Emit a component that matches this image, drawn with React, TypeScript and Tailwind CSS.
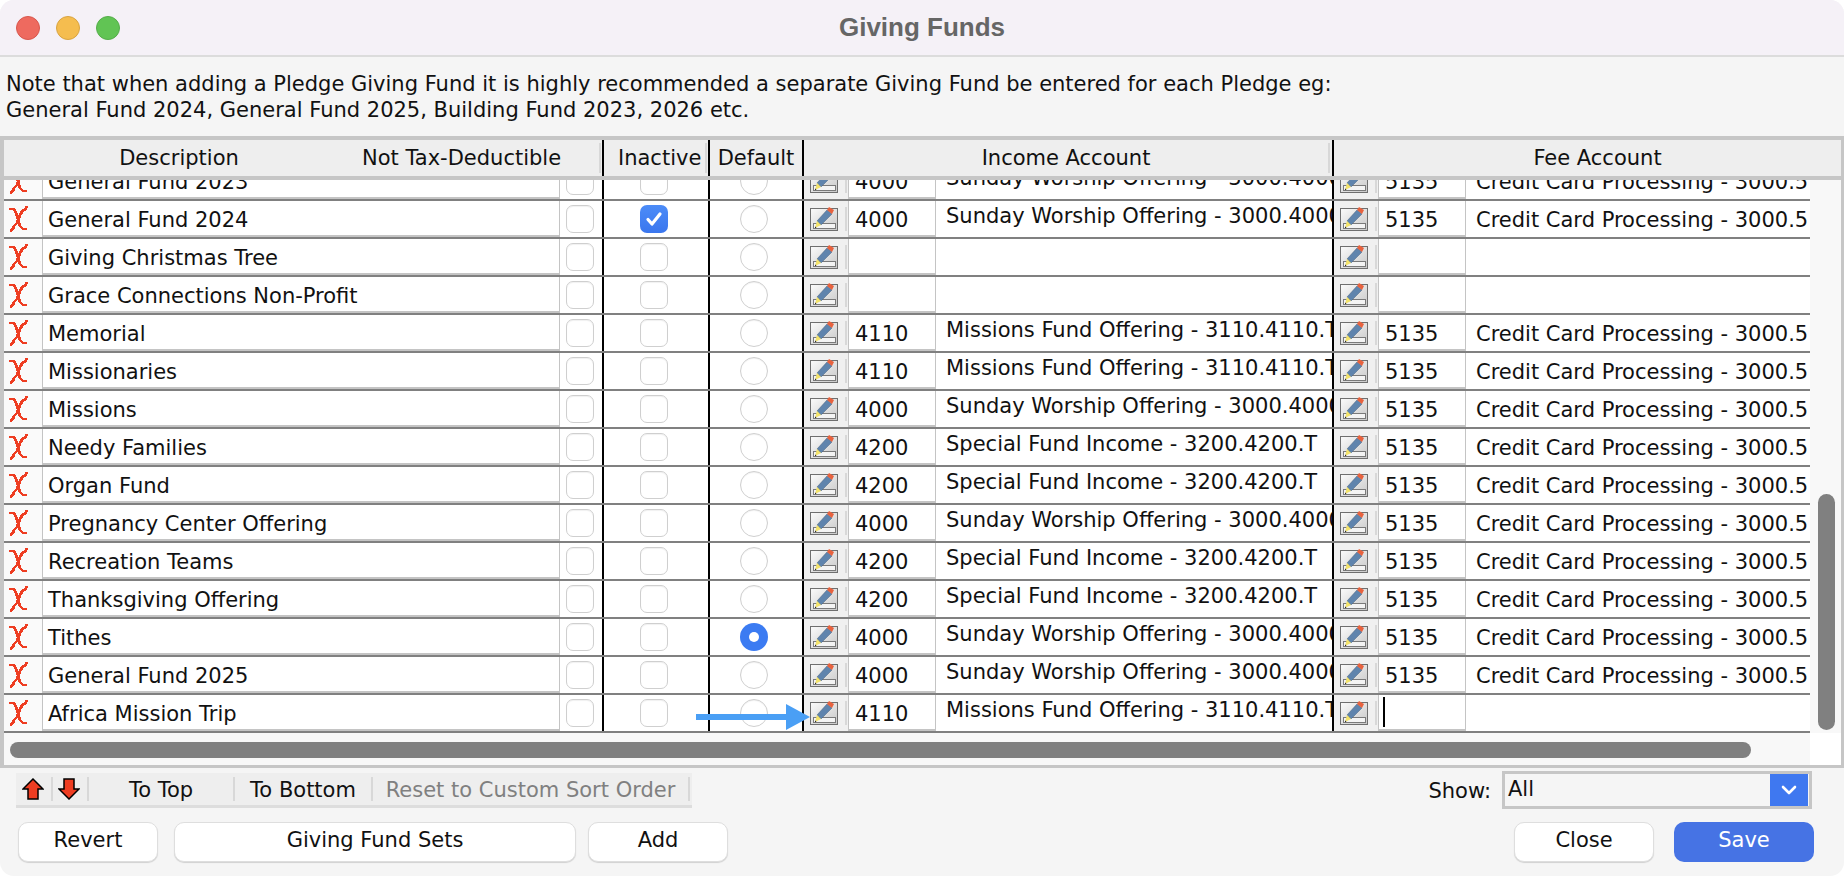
import React from 'react';

type Fund = {
  name: string;
  inactive?: boolean;
  isDefault?: boolean;
  code?: string;
  account?: string;
  feeCode?: string;
  feeAccount?: string;
  caret?: boolean;
};

const SUNDAY = 'Sunday Worship Offering - 3000.4000.T';
const MISSIONS = 'Missions Fund Offering - 3110.4110.T';
const SPECIAL = 'Special Fund Income - 3200.4200.T';
const CARD = 'Credit Card Processing - 3000.5135.T';

const FUNDS: Fund[] = [
  { name: 'General Fund 2023', code: '4000', account: SUNDAY, feeCode: '5135', feeAccount: CARD },
  { name: 'General Fund 2024', inactive: true, code: '4000', account: SUNDAY, feeCode: '5135', feeAccount: CARD },
  { name: 'Giving Christmas Tree' },
  { name: 'Grace Connections Non-Profit' },
  { name: 'Memorial', code: '4110', account: MISSIONS, feeCode: '5135', feeAccount: CARD },
  { name: 'Missionaries', code: '4110', account: MISSIONS, feeCode: '5135', feeAccount: CARD },
  { name: 'Missions', code: '4000', account: SUNDAY, feeCode: '5135', feeAccount: CARD },
  { name: 'Needy Families', code: '4200', account: SPECIAL, feeCode: '5135', feeAccount: CARD },
  { name: 'Organ Fund', code: '4200', account: SPECIAL, feeCode: '5135', feeAccount: CARD },
  { name: 'Pregnancy Center Offering', code: '4000', account: SUNDAY, feeCode: '5135', feeAccount: CARD },
  { name: 'Recreation Teams', code: '4200', account: SPECIAL, feeCode: '5135', feeAccount: CARD },
  { name: 'Thanksgiving Offering', code: '4200', account: SPECIAL, feeCode: '5135', feeAccount: CARD },
  { name: 'Tithes', isDefault: true, code: '4000', account: SUNDAY, feeCode: '5135', feeAccount: CARD },
  { name: 'General Fund 2025', code: '4000', account: SUNDAY, feeCode: '5135', feeAccount: CARD },
  { name: 'Africa Mission Trip', code: '4110', account: MISSIONS, caret: true },
];

// pixel-art delete cross
const DeleteIcon = () => (
  <svg width="19" height="26" viewBox="0 0 19 26" shapeRendering="crispEdges" fill="none" stroke="#ee3d22" strokeWidth="2.8">
    <path d="M0 3h5l2 4 4 13 3 3h4M18 0l-2 4h-2l-3 5-3 8-3 3-1 3-3 2" />
  </svg>
);

const PencilIcon = () => (
  <svg width="28" height="24" viewBox="0 0 28 24">
    <defs>
      <linearGradient id="pencil-bg" x1="0" y1="0" x2="1" y2="1">
        <stop offset="0" stopColor="#fbfbfb" />
        <stop offset="1" stopColor="#c8c8c8" />
      </linearGradient>
    </defs>
    <rect x="0.5" y="1.5" width="27" height="22" fill="url(#pencil-bg)" stroke="#6f6f6f" />
    <rect x="3.5" y="16.5" width="22" height="5" fill="#f4f4f4" stroke="#7a7a7a" />
    <path d="M7 14L17 3l5 4-11 11z" fill="#5f84ad" stroke="#46607f" strokeWidth="0.5" />
    <path d="M17 3l2-3 5 3-2 4z" fill="#e8623e" />
    <path d="M7 14l4 4-6 3z" fill="#f3e36b" />
    <path d="M5 19.500l1.500 1-1.500.7z" fill="#222" />
  </svg>
);

const Checkbox = ({ checked }: { checked?: boolean }) =>
  checked ? (
    <div className="w-[28px] h-[28px] rounded-[7px] bg-gradient-to-b from-[#4c8cf8] to-[#3a76ee] flex items-center justify-center">
      <svg width="20" height="20" viewBox="0 0 20 20" fill="none" stroke="#fff" strokeWidth="3.2" strokeLinecap="round" strokeLinejoin="round">
        <path d="M4 10.500l4 4.500 8-10" />
      </svg>
    </div>
  ) : (
    <div className="w-[28px] h-[28px] rounded-[7px] bg-white border border-[#cfcfcf] shadow-[inset_0_1px_1px_rgba(0,0,0,0.06)]" />
  );

const Radio = ({ checked }: { checked?: boolean }) =>
  checked ? (
    <div className="w-[28px] h-[28px] rounded-full bg-[#3b7bf2] flex items-center justify-center">
      <div className="w-[10px] h-[10px] rounded-full bg-white" />
    </div>
  ) : (
    <div className="w-[28px] h-[28px] rounded-full bg-white border border-[#cfcfcf] shadow-[inset_0_1px_1px_rgba(0,0,0,0.06)]" />
  );

const PencilCell = () => (
  <div className="w-[44px] h-full shrink-0 bg-[#f0f0f0] flex items-center">
    <div className="ml-[6px] flex"><PencilIcon /></div>
    <div className="ml-[7px] w-[2px] h-[24px] bg-[#d8d8d8]" />
  </div>
);

const Row = ({ fund }: { fund: Fund }) => (
  <div className="h-[38px] flex border-b-2 border-[#808080] bg-white">
    <div className="w-[38px] shrink-0 flex items-center pl-[5px] bg-[#fafafa]"><DeleteIcon /></div>
    <div className="w-[517px] shrink-0 pl-[5px] pt-[5px] flex items-center border-l border-b-2 border-[#c4c4c4] bg-white">{fund.name}</div>
    <div className="w-[43px] shrink-0 flex items-center pl-[6px] border-l border-[#c4c4c4]"><Checkbox /></div>
    <div className="w-[106px] shrink-0 flex items-center pl-[36px] border-l-2 border-black"><Checkbox checked={fund.inactive} /></div>
    <div className="w-[94px] shrink-0 flex items-center pl-[30px] border-l-2 border-black"><Radio checked={fund.isDefault} /></div>
    <div className="w-[2px] shrink-0 bg-black" />
    <PencilCell />
    <div className="w-[88px] shrink-0 pl-[6px] pt-[5px] flex items-center border-x border-b-2 border-[#c4c4c4]">{fund.code}</div>
    <div className="w-[396px] shrink-0 pl-[10px] pb-[4px] flex items-center overflow-hidden whitespace-nowrap">{fund.account}</div>
    <div className="w-[2px] shrink-0 bg-black" />
    <PencilCell />
    <div className="w-[88px] shrink-0 pl-[6px] pt-[5px] flex items-center border-x border-b-2 border-[#c4c4c4]">
      {fund.caret ? <div className="w-[2px] h-[30px] -ml-[2px] -mt-[5px] bg-black" /> : fund.feeCode}
    </div>
    <div className="w-[344px] shrink-0 pl-[10px] pt-[4px] flex items-center overflow-hidden whitespace-nowrap">{fund.feeAccount}</div>
  </div>
);

const Header = () => (
  <div className="h-[36px] flex items-center bg-[#eeeeee] text-[#111]">
    <div className="w-[114px] shrink-0" />
    <div className="w-[122px] shrink-0 pt-[2px] text-center whitespace-nowrap">Description</div>
    <div className="w-[122px] shrink-0" />
    <div className="w-[240px] shrink-0 flex justify-between items-center pr-[1px]">
      <span className="pt-[2px] whitespace-nowrap">Not Tax-Deductible</span>
      <span className="w-[2px] h-[30px] bg-[#d8d8d8]" />
    </div>
    <div className="w-[106px] h-full shrink-0 flex items-center justify-between border-l-2 border-black pl-[14px] pr-[1px]">
      <span className="pt-[2px]">Inactive</span>
      <span className="w-[2px] h-[30px] bg-[#d8d8d8]" />
    </div>
    <div className="w-[94px] h-full shrink-0 pt-[2px] flex items-center justify-center border-l-2 border-black whitespace-nowrap">Default</div>
    <div className="w-[530px] h-full shrink-0 flex items-center border-l-2 border-black pr-[2px]">
      <span className="flex-1 pt-[2px] text-center">Income Account</span>
      <span className="w-[2px] h-[30px] bg-[#d8d8d8]" />
    </div>
    <div className="flex-1 h-full pt-[2px] flex items-center justify-center border-l-2 border-black pl-[20px]">Fee Account</div>
  </div>
);

const ArrowIcon = ({ down }: { down?: boolean }) => (
  <svg width="22" height="22" viewBox="0 0 22 22" className={down ? 'rotate-180' : ''}>
    <path d="M11 1L21 11h-5v10H6V11H1z" fill="#ee3d22" stroke="#000" strokeWidth="1.5" />
  </svg>
);

const Btn = ({ children, w, primary }: { children: React.ReactNode; w: string; primary?: boolean }) => (
  <button
    className={`${w} h-[40px] pb-[3px] rounded-[10px] flex items-center justify-center ${
      primary ? 'bg-[#4673e4] text-white font-medium' : 'bg-white border border-[#dedede] shadow-[0_1px_1px_rgba(0,0,0,0.15)] text-[#111]'
    }`}
  >
    {children}
  </button>
);

export default function App() {
  return (
    <div className="relative w-[1844px] h-[876px] flex flex-col overflow-hidden rounded-[14px] bg-[#f5f5f5] text-[21px] text-[#111] font-['DejaVu_Sans',sans-serif]">
      <div className="h-[57px] shrink-0 flex items-center bg-[#f5f1f7] border-b-2 border-[#dcdcdc]">
        <div className="flex gap-[16px] pl-[16px]">
          <span className="w-[24px] h-[24px] rounded-full bg-[#ee6a5f] border border-[#d8574d]" />
          <span className="w-[24px] h-[24px] rounded-full bg-[#f5bd4f] border border-[#d9a441]" />
          <span className="w-[24px] h-[24px] rounded-full bg-[#61c454] border border-[#55ad4a]" />
        </div>
        <div className="flex-1 text-center pr-[120px] text-[26px] font-bold text-[#666666] font-['Liberation_Sans',sans-serif]">Giving Funds</div>
      </div>

      <div className="h-[79px] shrink-0 px-[6px] pt-[14px] leading-[26px] whitespace-nowrap">
        <div>Note that when adding a Pledge Giving Fund it is highly recommended a separate Giving Fund be entered for each Pledge eg:</div>
        <div>General Fund 2024, General Fund 2025, Building Fund 2023, 2026 etc.</div>
      </div>

      <div className="h-[632px] shrink-0 flex flex-col border-[#c6c6c6] border-t-4 border-l-4 border-r-[3px] border-b-[3px] bg-[#f8f8f8]">
        <div className="border-b-4 border-[#c6c6c6]"><Header /></div>
        <div className="h-[553px] flex overflow-hidden">
          <div className="w-[1806px] shrink-0 -mt-[17px]">
            {FUNDS.map((fund) => (
              <Row key={fund.name} fund={fund} />
            ))}
          </div>
          <div className="flex-1 bg-[#f8f8f8] flex flex-col justify-end pb-[3px] pl-[8px]">
            <div className="w-[17px] h-[236px] rounded-full bg-[#808080]" />
          </div>
        </div>
        <div className="flex-1 flex">
          <div className="w-[1806px] pl-[6px] pt-[9px]">
            <div className="w-[1741px] h-[16px] rounded-full bg-[#808080]" />
          </div>
          <div className="flex-1 bg-white" />
        </div>
      </div>

      <div className="flex-1 px-[16px] pt-[5px] flex flex-col">
        <div className="h-[35px] flex justify-between items-start">
          <div className="w-[676px] h-[35px] flex items-center bg-[#eeeeee] border-b-[3px] border-[#dddddd]">
            <div className="w-[35px] pl-[6px] flex"><ArrowIcon /></div>
            <div className="w-[2px] h-[24px] bg-[#d8d8d8]" />
            <div className="w-[34px] pl-[5px] flex"><ArrowIcon down /></div>
            <div className="w-[2px] h-[24px] bg-[#d8d8d8]" />
            <div className="w-[144px] pt-[3px] text-center">To Top</div>
            <div className="w-[2px] h-[24px] bg-[#d8d8d8]" />
            <div className="w-[136px] pt-[3px] text-center whitespace-nowrap">To Bottom</div>
            <div className="w-[2px] h-[24px] bg-[#d8d8d8]" />
            <div className="w-[315px] pt-[3px] text-center text-[#808080] whitespace-nowrap">Reset to Custom Sort Order</div>
            <div className="w-[2px] h-[24px] bg-[#d8d8d8]" />
          </div>
          <div className="flex items-center gap-[11px] -mt-[2px] pr-[16px]">
            <span className="pt-[4px]">Show:</span>
            <div className="w-[310px] h-[38px] border-[3px] border-[#c6c6c6] flex items-center justify-between pl-[3px] pr-[1px]">
              <span>All</span>
              <div className="w-[38px] h-[32px] bg-[#3f78f0] flex items-center justify-center">
                <svg width="16" height="10" viewBox="0 0 16 10" fill="none" stroke="#fff" strokeWidth="2.6" strokeLinecap="round" strokeLinejoin="round">
                  <path d="M2 2l6 6 6-6" />
                </svg>
              </div>
            </div>
          </div>
        </div>

        <div className="flex justify-between mt-[14px] pl-[2px] pr-[14px]">
          <div className="flex gap-[12px]">
            <div className="mr-[4px]"><Btn w="w-[140px]">Revert</Btn></div>
            <Btn w="w-[402px]">Giving Fund Sets</Btn>
            <Btn w="w-[140px]">Add</Btn>
          </div>
          <div className="flex gap-[20px]">
            <Btn w="w-[140px]">Close</Btn>
            <Btn w="w-[140px]" primary>Save</Btn>
          </div>
        </div>
      </div>

      {/* annotation arrow drawn over the table */}
      <svg className="absolute left-[696px] top-[704px]" width="114" height="26" viewBox="0 0 114 26" fill="#4a9ff5">
        <path d="M0 10h90V0l24 13-24 13V16H0z" />
      </svg>
    </div>
  );
}
